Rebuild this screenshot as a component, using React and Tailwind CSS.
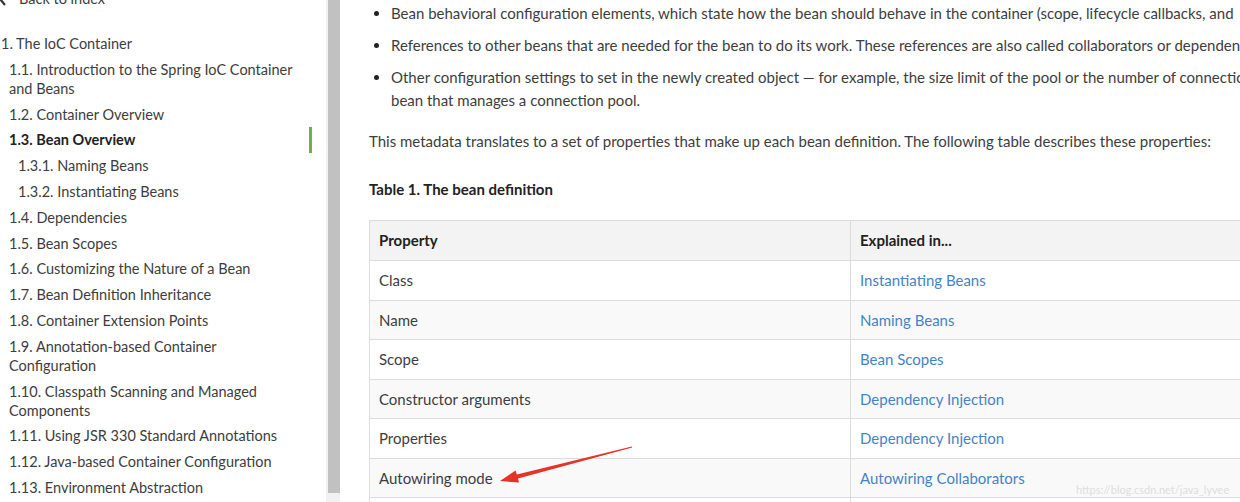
import React from "react";

const FONT = { fontFamily: "Lato, 'Open Sans', sans-serif" };

const nav = [
  { t: "1. The IoC Container", lvl: 0 },
  { t: ["1.1. Introduction to the Spring IoC Container", "and Beans"], lvl: 1 },
  { t: "1.2. Container Overview", lvl: 1 },
  { t: "1.3. Bean Overview", lvl: 1, active: true },
  { t: "1.3.1. Naming Beans", lvl: 2 },
  { t: "1.3.2. Instantiating Beans", lvl: 2 },
  { t: "1.4. Dependencies", lvl: 1 },
  { t: "1.5. Bean Scopes", lvl: 1 },
  { t: "1.6. Customizing the Nature of a Bean", lvl: 1 },
  { t: "1.7. Bean Definition Inheritance", lvl: 1 },
  { t: "1.8. Container Extension Points", lvl: 1 },
  { t: ["1.9. Annotation-based Container", "Configuration"], lvl: 1 },
  { t: ["1.10. Classpath Scanning and Managed", "Components"], lvl: 1 },
  { t: "1.11. Using JSR 330 Standard Annotations", lvl: 1 },
  { t: "1.12. Java-based Container Configuration", lvl: 1 },
  { t: "1.13. Environment Abstraction", lvl: 1 },
];

const rows = [
  ["Class", "Instantiating Beans"],
  ["Name", "Naming Beans"],
  ["Scope", "Bean Scopes"],
  ["Constructor arguments", "Dependency Injection"],
  ["Properties", "Dependency Injection"],
  ["Autowiring mode", "Autowiring Collaborators"],
];

export default function App() {
  return (
    <div
      className="relative w-[1240px] h-[502px] overflow-hidden bg-white flex text-[#3d3d3d]"
      style={FONT}
    >
      {/* Sidebar */}
      <aside className="w-[326px] shrink-0 overflow-hidden bg-white text-[14.5px]">
        <div className="mt-[-11px] flex items-center h-[19px] leading-[19px]">
          <svg width="9" height="14" viewBox="0 0 9 14" className="ml-[-2px]">
            <path d="M7 1 L2 7 L7 13" fill="none" stroke="#333" strokeWidth="2.2" />
          </svg>
          <span className="ml-[12px]">Back to index</span>
        </div>
        <ul className="mt-[26px] flex flex-col gap-[6.8px] ml-[1px]">
          {nav.map((n, i) => (
            <li
              key={i}
              className={
                "relative leading-[19px] " +
                (n.lvl === 1 ? "pl-[8px] " : n.lvl === 2 ? "pl-[17px] " : "") +
                (n.active ? "font-bold text-[#222]" : "")
              }
            >
              {Array.isArray(n.t) ? (
                <>
                  {n.t[0]}
                  <br />
                  {n.t[1]}
                </>
              ) : (
                n.t
              )}
              {n.active && (
                <span className="absolute right-[14px] top-[-3px] w-[3px] h-[26px] bg-[#6db33f]" />
              )}
            </li>
          ))}
        </ul>
      </aside>

      {/* Scrollbar */}
      <div className="w-[14px] shrink-0 bg-[#f1f1f1] flex flex-col">
        <div className="ml-[2px] w-[12px] h-[493px] bg-[#c1c1c1]" />
      </div>

      {/* Main */}
      <main className="flex-1 pl-[29px] min-w-0 overflow-hidden text-[15px]">
        <div className="w-[1000px]">
          <ul className="mt-[2px] flex flex-col gap-[9px] pl-[22px] list-disc marker:text-[#222]">
            <li className="leading-[23px]">
              Bean behavioral configuration elements, which state how the bean should behave in the container (scope, lifecycle callbacks, and
            </li>
            <li className="leading-[23px]">
              References to other beans that are needed for the bean to do its work. These references are also called collaborators or dependencies.
            </li>
            <li className="leading-[23px]">
              Other configuration settings to set in the newly created object — for example, the size limit of the pool or the number of connections
              <br />
              bean that manages a connection pool.
            </li>
          </ul>
          <p className="mt-[18px] leading-[23px]">
            This metadata translates to a set of properties that make up each bean definition. The following table describes these properties:
          </p>
          <p className="mt-[25px] leading-[23px] font-bold text-[#222]">Table 1. The bean definition</p>

          <div className="mt-[19px] w-[1000px] border-t border-l border-[#dcdcdc]">
            <div className="flex h-[40px] bg-[#f3f3f3] border-b border-[#dcdcdc] font-bold text-[#222]">
              <div className="w-[481px] border-r border-[#dcdcdc] pl-[9px] flex items-center">Property</div>
              <div className="flex-1 pl-[9px] flex items-center">Explained in...</div>
            </div>
            {rows.map((r, i) => (
              <div
                key={i}
                className={
                  "flex h-[39.5px] border-b border-[#dcdcdc] " +
                  (i % 2 === 1 ? "bg-[#f9f9f9]" : "bg-white")
                }
              >
                <div className="w-[481px] border-r border-[#dcdcdc] pl-[9px] flex items-center">{r[0]}</div>
                <div className="flex-1 pl-[9px] flex items-center text-[#4583c6]">{r[1]}</div>
              </div>
            ))}
            <div className="flex h-[39.5px] bg-white">
              <div className="w-[481px] border-r border-[#dcdcdc]" />
              <div className="flex-1" />
            </div>
          </div>
        </div>
      </main>

      {/* Red annotation arrow */}
      <svg
        className="absolute left-0 top-0 pointer-events-none"
        width="1240"
        height="502"
        viewBox="0 0 1240 502"
      >
        <polygon
          points="500,481 519,482.5 518,478.4 632.2,447.6 631.8,446.4 516.8,474.6 515.6,470.5"
          fill="#e5332a"
        />
      </svg>

      {/* Watermark */}
      <span className="absolute left-[1076px] top-[482px] text-[11px] leading-[16px] text-[#dedede]">
        https://blog.csdn.net/java_lyvee
      </span>
    </div>
  );
}
